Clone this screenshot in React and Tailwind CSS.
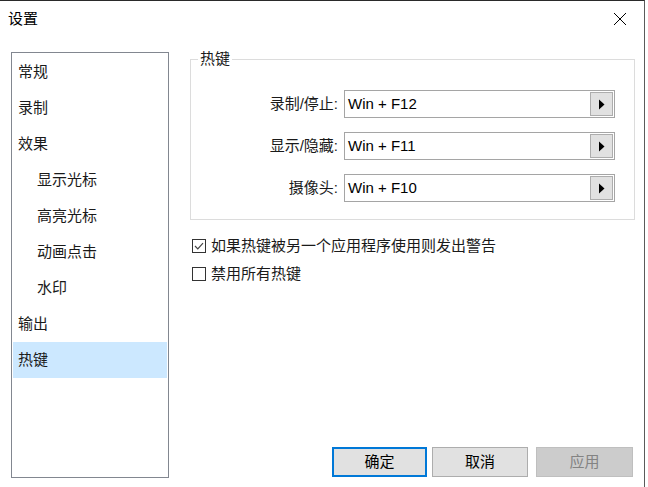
import React, { useState } from 'react';

const FONT = "font-['Liberation_Sans','Noto_Sans_CJK_SC',sans-serif]";

const navItems = [
  { label: '常规', sub: false },
  { label: '录制', sub: false },
  { label: '效果', sub: false },
  { label: '显示光标', sub: true },
  { label: '高亮光标', sub: true },
  { label: '动画点击', sub: true },
  { label: '水印', sub: true },
  { label: '输出', sub: false },
  { label: '热键', sub: false },
];

const hotkeys = [
  { label: '录制/停止:', value: 'Win + F12' },
  { label: '显示/隐藏:', value: 'Win + F11' },
  { label: '摄像头:', value: 'Win + F10' },
];

const HotkeyRow = ({ label, value }) => (
  <div className="flex items-center h-[28px]">
    <div className="w-[148px] pr-[1px] text-right text-[15px] text-[#1a1a1a]">{label}</div>
    <div className="ml-[5px] w-[271px] h-[28px] border border-[#a5a5a5] bg-white flex items-center justify-between pl-[3px] pr-[1px]">
      <span className="text-[15px] text-black">{value}</span>
      <button className="w-[23px] h-[24px] bg-[#e1e1e1] border border-[#adadad] flex items-center justify-center">
        <svg width="7" height="11" viewBox="0 0 7 11">
          <path d="M1 0.5 L6.5 5.5 L1 10.5 Z" fill="#000" />
        </svg>
      </button>
    </div>
  </div>
);

const Checkbox = ({ checked, onChange, label }) => (
  <label className="flex items-center h-[20px] cursor-default" onClick={onChange}>
    <span className="w-[14px] h-[14px] border border-[#333333] bg-white flex items-center justify-center ml-[2px]">
      {checked && (
        <svg width="10" height="8" viewBox="0 0 10 8">
          <path d="M1 4 L3.8 6.8 L9 1.2" stroke="#444" strokeWidth="1.2" fill="none" />
        </svg>
      )}
    </span>
    <span className="ml-[5px] text-[15px] text-[#1a1a1a]">{label}</span>
  </label>
);

const App = () => {
  const [selected, setSelected] = useState('热键');
  const [warn, setWarn] = useState(true);
  const [disableAll, setDisableAll] = useState(false);

  return (
    <div className={`w-[648px] h-[487px] bg-white overflow-hidden ${FONT}`}>
      <div className="w-[645px] h-full border-t border-r border-t-[#2a2a2a] border-r-[#5a5a5a] flex flex-col">
        {/* title bar */}
        <div className="h-[36px] flex items-center justify-between pl-[8px] pr-[17px]">
          <span className="text-[15px] text-black">设置</span>
          <svg width="14" height="14" viewBox="0 0 14 14">
            <path d="M1 1 L13 13 M13 1 L1 13" stroke="#000" strokeWidth="1" />
          </svg>
        </div>

        <div className="flex pl-[11px] mt-[15px]">
          {/* left nav */}
          <div className="w-[158px] h-[426px] border border-[#828790] p-[1px]">
            {navItems.map(item => (
              <div
                key={item.label}
                onClick={() => setSelected(item.label)}
                className={`h-[36px] flex items-center text-[15px] text-[#1a1a1a] ${item.sub ? 'pl-[24px]' : 'pl-[5px]'} ${selected === item.label ? 'bg-[#cce8ff]' : ''}`}
              >
                {item.label}
              </div>
            ))}
          </div>

          {/* right panel */}
          <div className="ml-[21px] w-[445px] h-[426px] flex flex-col">
            <div className="relative mt-[7px] h-[161px] border border-[#dcdcdc] pt-[30px]">
              <span className="absolute -top-[11px] left-[7px] bg-white px-[2px] leading-[20px] text-[15px] text-[#1a1a1a]">
                热键
              </span>
              <div className="flex flex-col gap-[14px]">
                {hotkeys.map(h => (
                  <HotkeyRow key={h.label} {...h} />
                ))}
              </div>
            </div>

            <div className="mt-[16px] flex flex-col gap-[8px]">
              <Checkbox checked={warn} onChange={() => setWarn(!warn)} label="如果热键被另一个应用程序使用则发出警告" />
              <Checkbox checked={disableAll} onChange={() => setDisableAll(!disableAll)} label="禁用所有热键" />
            </div>

            <div className="mt-auto mb-[1px] flex justify-end pr-[2px]">
              <button className="w-[95px] h-[30px] bg-[#e1e1e1] border-2 border-[#0078d7] text-[15px] text-black">确定</button>
              <button className="ml-[5px] w-[96px] h-[30px] bg-[#e1e1e1] border border-[#adadad] text-[15px] text-black">取消</button>
              <button className="ml-[8px] w-[97px] h-[30px] bg-[#cccccc] border border-[#bfbfbf] text-[15px] text-[#838383]" disabled>应用</button>
            </div>
          </div>
        </div>
      </div>
    </div>
  );
};

export default App;
